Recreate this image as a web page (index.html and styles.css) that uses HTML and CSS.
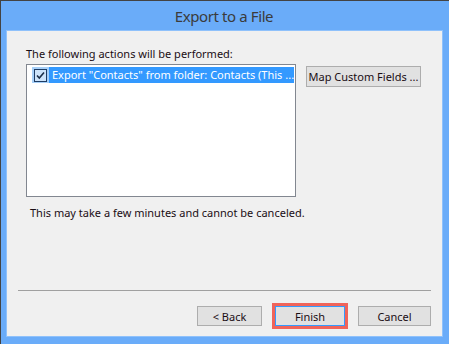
FILE: index.html
```html
<!DOCTYPE html>
<html>
<head>
<meta charset="utf-8">
<link rel="stylesheet" href="styles.css">
</head>
<body>
<div class="window">
  <div class="titlebar">Export to a File</div>
  <div class="panel">
    <div class="label">The following actions will be performed:</div>
    <div class="main-row">
      <div class="listbox">
        <div class="list-item">
          <span class="check-cell">
            <svg class="checkbox" width="13" height="13" viewBox="0 0 13 13">
              <rect x="0.5" y="0.5" width="12" height="12" fill="#cde4fb" stroke="#1e3c64"/>
              <path d="M3 6.5 L5.3 9 L10 3.5" fill="none" stroke="#1b2f4a" stroke-width="1.6"/>
            </svg>
          </span>
          <span class="item-text">Export "Contacts" from folder: Contacts (This ...</span>
        </div>
      </div>
      <div class="btn map-btn">Map Custom Fields ...</div>
    </div>
    <div class="note">This may take a few minutes and cannot be canceled.</div>
    <div class="spacer"></div>
    <div class="separator"></div>
    <div class="btn-row">
      <div class="btn back">&lt; Back</div>
      <div class="btn finish">Finish</div>
      <div class="btn cancel">Cancel</div>
    </div>
  </div>
</div>
</body>
</html>
```
FILE: styles.css
```css
* { box-sizing: border-box; }
html, body { margin: 0; padding: 0; }
body {
  width: 449px;
  height: 344px;
  overflow: hidden;
  font-family: "Noto Sans", "Open Sans", sans-serif;
  font-size: 11px;
  color: #1a0d14;
}
.window {
  width: 449px;
  height: 344px;
  background: #6aacf9;
  border-top: 1px solid #434343;
  border-left: 1px solid #434343;
  display: flex;
  flex-direction: column;
}
.titlebar {
  height: 29px;
  display: flex;
  align-items: center;
  justify-content: center;
  font-size: 15px;
  letter-spacing: -0.4px;
  color: #3b3b3b;
  padding-right: 2px;
  padding-top: 1px;
}
.panel {
  margin-left: 5px;
  width: 437px;
  height: 307px;
  background: #f0f0f0;
  border: 1px solid #8fc1fb;
  display: flex;
  flex-direction: column;
  padding: 15px 11px 0 19px;
}
.label {
  line-height: 16px;
  height: 16px;
}
.main-row {
  display: flex;
  margin-top: 2px;
}
.listbox {
  width: 270px;
  height: 133px;
  background: #fff;
  border: 1px solid #828790;
  padding: 2px 1px 0 5px;
}
.list-item {
  display: flex;
  height: 16px;
}
.check-cell {
  width: 17px;
  height: 16px;
  background: #a6cff8;
  display: flex;
  align-items: center;
  justify-content: center;
}
.checkbox { display: block; }
.item-text {
  flex: 1;
  background: #3399ff;
  color: #fff;
  padding-left: 3px;
  line-height: 16px;
  white-space: nowrap;
  overflow: hidden;
}
.btn {
  background: #e1e1e1;
  border: 1px solid #adadad;
  display: flex;
  align-items: center;
  justify-content: center;
  white-space: nowrap;
  height: 20px;
}
.map-btn {
  margin-left: 10px;
  margin-top: 2px;
  width: 115px;
  height: 21px;
}
.note {
  margin-top: 8px;
  padding-left: 4px;
  line-height: 16px;
}
.spacer { flex: 1; }
.separator {
  margin-left: -8px;
  width: 413px;
  height: 1px;
  background: #a0a0a0;
  margin-bottom: 15px;
}
.btn-row {
  display: flex;
  justify-content: flex-end;
  align-items: center;
  margin-bottom: 10px;
}
.back { width: 65px; }
.finish {
  width: 70px;
  margin-left: 13px;
  border-color: #3399ff;
  outline: 3px solid #f0645a;
}
.cancel {
  width: 73px;
  margin-left: 13px;
}
```
